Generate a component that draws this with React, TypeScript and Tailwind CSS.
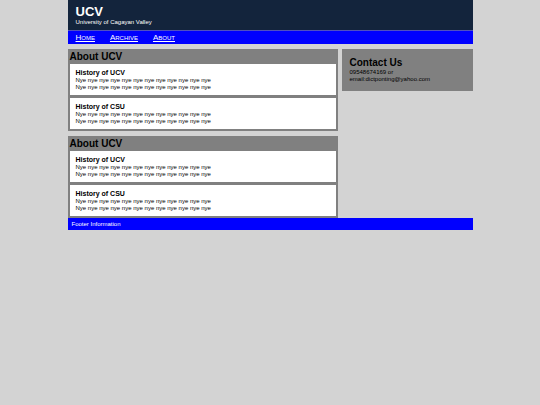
type Article = { title: string; lines: string[] };

const nye = "Nye nye nye nye nye nye nye nye nye nye nye nye";

const articles: Article[] = [
  { title: "History of UCV", lines: [nye, nye] },
  { title: "History of CSU", lines: [nye, nye] },
];

const links = ["Home", "Archive", "About"];

function Section({ title }: { title: string }) {
  return (
    <section className="bg-[#808080] px-[2px] pb-[2px]">
      <h2 className="pt-px text-[10px] leading-[14px] font-bold">{title}</h2>
      <div className="flex flex-col gap-[3px]">
        {articles.map((article) => (
          <article key={article.title} className="bg-white px-[6px] py-1">
            <h3 className="text-[7px] leading-[9px] font-bold">{article.title}</h3>
            {article.lines.map((line, i) => (
              <p key={i}>{line}</p>
            ))}
          </article>
        ))}
      </div>
    </section>
  );
}

export default function App() {
  return (
    <div className="min-h-screen bg-[#d3d3d3] font-['Liberation_Sans',Arial,sans-serif] text-[6px] leading-[7px] text-black">
      <div className="mx-auto w-3/4">
        <header className="border-b border-[#5050c0] bg-[#13243c] px-2 pt-[5px] pb-1 text-white">
          <h1 className="text-[13px] leading-[14px] font-bold">UCV</h1>
          <p>University of Cagayan Valley</p>
        </header>
        <nav className="bg-[#0000ff] px-2 text-white">
          <ul className="flex gap-[15px]">
            {links.map((link) => (
              <li key={link} className="text-[8px] leading-[13px]">
                <a href="#" className="underline [font-variant:small-caps]">
                  {link}
                </a>
              </li>
            ))}
          </ul>
        </nav>
        <div className="grid grid-cols-[2fr_1fr] items-start pt-[5px]">
          <main className="flex flex-col gap-[5px]">
            <Section title="About UCV" />
            <Section title="About UCV" />
          </main>
          <aside className="ml-1 bg-[#808080] px-2 py-2">
            <h2 className="text-[10px] leading-[12px] font-bold">Contact Us</h2>
            <p>09548674169 or</p>
            <p>email:dictponting@yahoo.com</p>
          </aside>
        </div>
        <footer className="bg-[#0000ff] px-1 pt-[3px] pb-[2px] text-white">Footer Information</footer>
      </div>
    </div>
  );
}
